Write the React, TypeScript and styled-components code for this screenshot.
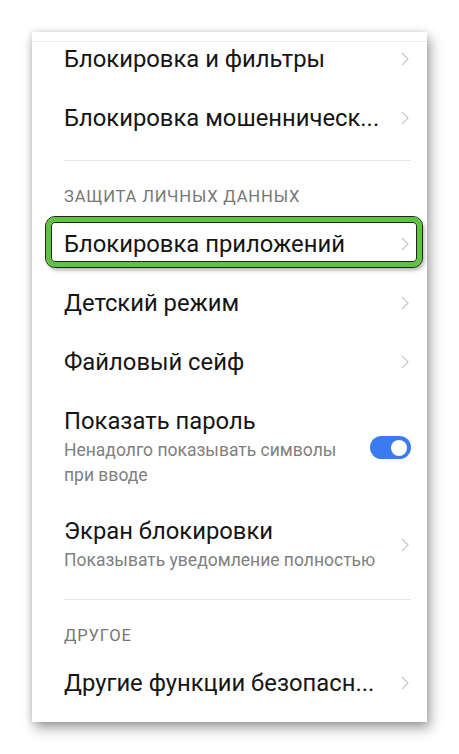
import React from 'react'
import styled, { createGlobalStyle } from 'styled-components'

const GlobalStyle = createGlobalStyle`
    html, body {
        margin: 0;
        padding: 0;
        background: #ffffff;
        font-family: Roboto, "Noto Sans", sans-serif;
    }
`

const Page = styled.div`
    width: 459px;
    height: 754px;
    padding: 32px 32px 0 32px;
    box-sizing: border-box;
`

const Card = styled.div`
    position: relative;
    width: 395px;
    height: 690px;
    background: #ffffff;
    overflow: hidden;
    box-shadow: 3px 6px 12px rgba(0, 0, 0, 0.38), -1px 0 6px rgba(0, 0, 0, 0.12);
`

const TopLine = styled.div`
    position: absolute;
    top: 9px;
    left: 0;
    right: 0;
    height: 1px;
    background: #ececec;
`

const List = styled.div`
    display: flex;
    flex-direction: column;
    margin-top: -3px;
    padding: 0 16px 0 32px;
`

const Row = styled.div`
    position: relative;
    display: flex;
    align-items: center;
    height: 59px;
`

const Item = styled.div`
    display: flex;
    align-items: center;
    padding: 16px 0 13px 0;
`

const Texts = styled.div`
    flex: 1;
    min-width: 0;
`

const Title = styled.div`
    font-size: 23.8px;
    line-height: 28px;
    color: #151515;
    white-space: nowrap;
`

const Subtitle = styled.div<{ $narrow?: boolean }>`
    margin-top: 3px;
    font-size: 17.5px;
    line-height: 25px;
    color: #808080;
    max-width: ${p => (p.$narrow ? '290px' : 'none')};
`

const Divider = styled.div`
    margin-top: 13px;
    height: 1px;
    background: #e6e6e6;
`

const Header = styled.div`
    padding: 28px 0 9px 0;
    font-size: 16.6px;
    line-height: 16px;
    color: #777777;
    letter-spacing: 0.8px;
`

const Highlight = styled.div`
    position: absolute;
    top: 3px;
    bottom: 6px;
    left: -18px;
    right: -11px;
    border-radius: 9px;
    border: 5px solid #5ec43c;
    outline: 1px solid #1b2a14;
    box-shadow: inset 0 0 0 1px #1b2a14, 2px 3px 4px rgba(0, 0, 0, 0.35);
    pointer-events: none;
`

const Toggle = styled.div`
    position: relative;
    width: 41px;
    height: 23px;
    border-radius: 12px;
    background: #3a7bf2;
    flex-shrink: 0;
    &::after {
        content: '';
        position: absolute;
        right: 4px;
        top: 3.5px;
        width: 16px;
        height: 16px;
        border-radius: 50%;
        background: #ffffff;
    }
`

const Chevron = () => (
    <svg width="10" height="16" viewBox="0 0 10 16" style={{ flexShrink: 0, marginRight: 1 }}>
        <path d="M2 2 L8 8 L2 14" fill="none" stroke="#c9c9c9" strokeWidth="1.3" />
    </svg>
)

function App() {
    return (
        <>
            <GlobalStyle />
            <Page>
                <Card>
                    <List>
                        <Row>
                            <Texts><Title>Блокировка и фильтры</Title></Texts>
                            <Chevron />
                        </Row>
                        <Row>
                            <Texts><Title>Блокировка мошенническ...</Title></Texts>
                            <Chevron />
                        </Row>
                        <Divider />
                        <Header>ЗАЩИТА ЛИЧНЫХ ДАННЫХ</Header>
                        <Row>
                            <Texts><Title>Блокировка приложений</Title></Texts>
                            <Chevron />
                            <Highlight />
                        </Row>
                        <Row>
                            <Texts><Title>Детский режим</Title></Texts>
                            <Chevron />
                        </Row>
                        <Row>
                            <Texts><Title>Файловый сейф</Title></Texts>
                            <Chevron />
                        </Row>
                        <Item>
                            <Texts>
                                <Title>Показать пароль</Title>
                                <Subtitle $narrow>Ненадолго показывать символы при вводе</Subtitle>
                            </Texts>
                            <Toggle />
                        </Item>
                        <Item>
                            <Texts>
                                <Title>Экран блокировки</Title>
                                <Subtitle>Показывать уведомление полностью</Subtitle>
                            </Texts>
                            <Chevron />
                        </Item>
                        <Divider />
                        <Header>ДРУГОЕ</Header>
                        <Row>
                            <Texts><Title>Другие функции безопасн...</Title></Texts>
                            <Chevron />
                        </Row>
                    </List>
                    <TopLine />
                </Card>
            </Page>
        </>
    )
}

export default App
